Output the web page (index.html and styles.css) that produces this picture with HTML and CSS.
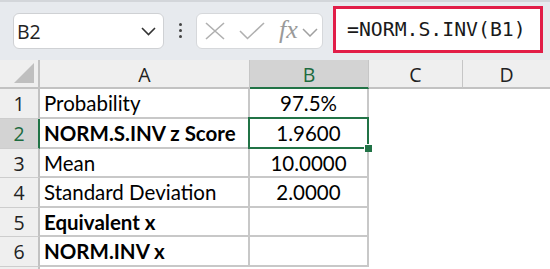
FILE: index.html
```html
<!DOCTYPE html>
<html>
<head>
<meta charset="utf-8">
<link rel="stylesheet" href="styles.css">
</head>
<body>
<div class="toolbar">
  <div class="namebox">
    <span class="nb-text">B2</span>
    <svg class="chev" width="15" height="9" viewBox="0 0 15 9"><path d="M1 1 L7.5 7.5 L14 1" fill="none" stroke="#333" stroke-width="1.6"/></svg>
  </div>
  <div class="dots"><i></i><i></i><i></i></div>
  <div class="fxbox">
    <svg class="ico" width="20" height="18" viewBox="0 0 20 18"><path d="M1 1 L19 17 M19 1 L1 17" fill="none" stroke="#b0b0b0" stroke-width="1.6"/></svg>
    <svg class="ico check" width="26" height="18" viewBox="0 0 26 18"><path d="M1 9 L8.5 16.5 L25 1" fill="none" stroke="#b0b0b0" stroke-width="1.6"/></svg>
    <span class="fx">fx</span>
    <svg class="chev2" width="16" height="9" viewBox="0 0 16 9"><path d="M1 1 L8 8 L15 1" fill="none" stroke="#a0a0a0" stroke-width="1.5"/></svg>
  </div>
  <div class="formula">=NORM.S.INV(B1)</div>
</div>
<div class="sheet">
  <div class="corner"><svg width="20" height="20" viewBox="0 0 20 20"><path d="M20 0 L20 20 L0 20 Z" fill="#bfbfbf"/></svg></div>
  <div class="ch">A</div>
  <div class="ch sel">B</div>
  <div class="ch">C</div>
  <div class="ch last">D</div>

  <div class="rh">1</div>
  <div class="c">Probability</div>
  <div class="c num">97.5%</div>
  <div class="e"></div><div class="e"></div>

  <div class="rh rsel">2</div>
  <div class="c b">NORM.S.INV z Score</div>
  <div class="c num active">1.9600<span class="selbox"></span><span class="handle"></span></div>
  <div class="e"></div><div class="e"></div>

  <div class="rh">3</div>
  <div class="c">Mean</div>
  <div class="c num">10.0000</div>
  <div class="e"></div><div class="e"></div>

  <div class="rh">4</div>
  <div class="c">Standard Deviation</div>
  <div class="c num">2.0000</div>
  <div class="e"></div><div class="e"></div>

  <div class="rh">5</div>
  <div class="c b">Equivalent x</div>
  <div class="c num"></div>
  <div class="e"></div><div class="e"></div>

  <div class="rh">6</div>
  <div class="c b">NORM.INV x</div>
  <div class="c num"></div>
  <div class="e"></div><div class="e"></div>

  <div class="rh tail"></div>
  <div class="e"></div><div class="e"></div><div class="e"></div><div class="e"></div>
</div>
</body>
</html>
```

FILE: styles.css
```css
* { box-sizing: border-box; }
html, body { margin: 0; padding: 0; }
body {
  width: 550px;
  height: 269px;
  overflow: hidden;
  background: #ffffff;
  font-family: "Lato", "Open Sans", sans-serif;
}

.toolbar {
  height: 60px;
  background: #e7eaee;
  border-top: 2px solid #d3d6da;
  display: flex;
  align-items: flex-start;
  padding-left: 13px;
}

.namebox {
  margin-top: 11px;
  width: 151px;
  height: 36px;
  background: #fff;
  border: 1px solid #cfd1d4;
  border-radius: 6px;
  display: flex;
  align-items: center;
  justify-content: space-between;
  padding: 0 7px 0 3px;
  font-family: "Open Sans", sans-serif;
  font-size: 19.5px;
  color: #222;
}
.chev { margin-top: 1px; }

.dots {
  width: 32px;
  height: 58px;
  display: flex;
  flex-direction: column;
  align-items: center;
  padding-top: 21px;
  gap: 3px;
}
.dots i {
  display: block;
  width: 3px;
  height: 3px;
  border-radius: 50%;
  background: #444;
}

.fxbox {
  margin-top: 11px;
  width: 127px;
  height: 36px;
  background: #fff;
  border: 1px solid #d6d8db;
  border-radius: 6px;
  display: flex;
  align-items: center;
  padding-left: 8px;
}
.fxbox .check { margin-left: 14px; }
.fx {
  margin-left: 14px;
  font-family: "Liberation Serif", serif;
  font-style: italic;
  font-size: 26px;
  color: #9a9a9a;
  line-height: 1;
  margin-top: -3px;
}
.chev2 { margin-left: 4px; margin-top: 2px; }

.formula {
  margin-left: 10px;
  margin-top: 4px;
  width: 210px;
  height: 47px;
  background: #fff;
  border: 3px solid #e11d48;
  display: flex;
  align-items: center;
  padding-left: 11px;
  font-family: "DejaVu Sans Mono", monospace;
  font-size: 19.8px;
  color: #1a1a1a;
}

.sheet {
  display: grid;
  grid-template-columns: 40px 210px 119px 94px 1fr;
  grid-template-rows: 29px 30px 30px 29px 30px 29px 30px 1fr;
  height: 209px;
}

.corner {
  background: #efefef;
  border-right: 2px solid #c2c2c2;
  border-bottom: 2px solid #c2c2c2;
  display: flex;
  align-items: flex-end;
  justify-content: flex-end;
  padding: 0 4px 4px 0;
}
.corner svg { display: block; }

.ch {
  background: #efefef;
  border-right: 1px solid #c6c6c6;
  border-bottom: 2px solid #c2c2c2;
  display: flex;
  align-items: center;
  justify-content: center;
  font-family: "Open Sans", sans-serif;
  font-size: 19.5px;
  color: #222;
  padding-top: 1px;
}
.ch.sel {
  background: #d3d3d3;
  color: #1d6b3f;
  border-bottom: 2px solid #217346;
}
.ch.last { border-right: none; }

.rh {
  background: #efefef;
  border-right: 2px solid #c2c2c2;
  border-bottom: 1px solid #cdcdcd;
  display: flex;
  align-items: center;
  justify-content: center;
  font-family: "Open Sans", sans-serif;
  font-size: 19.5px;
  color: #222;
}
.rh.rsel {
  background: #d3d3d3;
  color: #1d6b3f;
  border-right: 2px solid #217346;
}
.rh.tail { border-bottom: none; }

.c {
  border-right: 2px solid #c8c8c8;
  border-bottom: 2px solid #c8c8c8;
  display: flex;
  align-items: center;
  padding-left: 4px;
  font-size: 20.5px;
  color: #000;
  white-space: nowrap;
}
.c.b { font-weight: 700; }
.c.num { justify-content: center; padding-left: 0; }

.active { position: relative; }
.selbox {
  position: absolute;
  left: -2px;
  top: -2px;
  right: -2px;
  bottom: -2px;
  border: 2px solid #217346;
  z-index: 1;
}
.handle {
  position: absolute;
  right: -5px;
  bottom: -5px;
  width: 8px;
  height: 8px;
  background: #217346;
  border-left: 1px solid #fff;
  border-top: 1px solid #fff;
  z-index: 2;
}

.e { background: #fff; }
```
